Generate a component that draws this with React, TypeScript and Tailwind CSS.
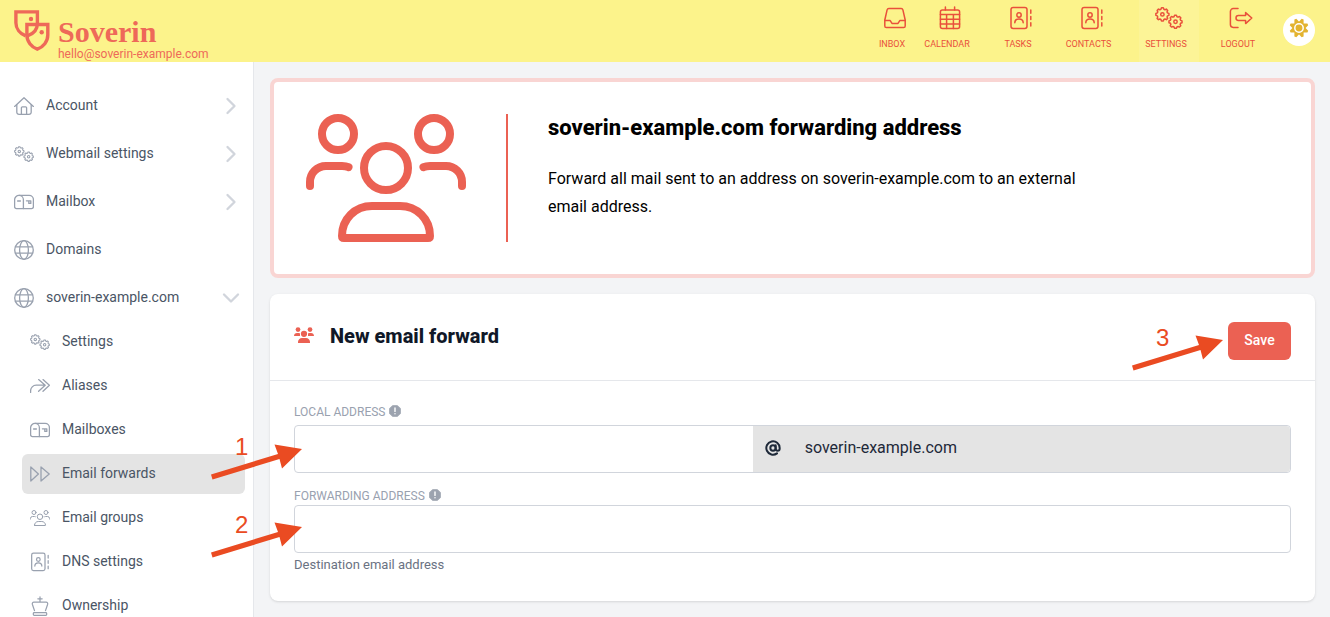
import React from "react";
import { AtSign, ChevronDown, ChevronRight } from "lucide-react";

type IconProps = { className?: string };

function Line({
  box = "0 0 20 20",
  width = 1.3,
  className = "",
  children,
}: {
  box?: string;
  width?: number;
  className?: string;
  children: React.ReactNode;
}) {
  return (
    <svg
      viewBox={box}
      className={className}
      fill="none"
      stroke="currentColor"
      strokeWidth={width}
      strokeLinecap="round"
      strokeLinejoin="round"
      aria-hidden="true"
    >
      {children}
    </svg>
  );
}

// Outline of a cog whose teeth alternate between two radii.
function cog(cx: number, cy: number, outer: number, inner: number, teeth: number, root: number, tip: number) {
  const points: string[] = [];
  const step = (Math.PI * 2) / teeth;
  for (let i = 0; i < teeth; i++) {
    const mid = i * step - Math.PI / 2;
    const corners: [number, number][] = [
      [-root, inner],
      [-tip, outer],
      [tip, outer],
      [root, inner],
    ];
    for (const [part, radius] of corners) {
      const a = mid + part * step;
      points.push(`${(cx + radius * Math.cos(a)).toFixed(2)} ${(cy + radius * Math.sin(a)).toFixed(2)}`);
    }
  }
  return `M${points.join("L")}Z`;
}

const Gears = ({ className }: IconProps) => (
  <Line box="0 0 28 22" width={1.5} className={className}>
    <path d={cog(7.4, 7.4, 6.6, 5.3, 8, 0.36, 0.18)} />
    <circle cx="7.4" cy="7.4" r="1.7" />
    <path d={cog(20.5, 14.8, 6.6, 5.3, 8, 0.36, 0.18)} />
    <circle cx="20.5" cy="14.8" r="1.7" />
  </Line>
);

const Home = ({ className }: IconProps) => (
  <Line className={className}>
    <path d="M.6 10.4 10 1.8l9.4 8.6" />
    <path d="M2.8 8.6v7.6a2.2 2.2 0 0 0 2.2 2.2h10a2.2 2.2 0 0 0 2.2-2.2V8.6" />
    <path d="M7.4 18.2v-6.4a.9.9 0 0 1 .9-.9h3.4a.9.9 0 0 1 .9.9v6.4" />
  </Line>
);

const MailboxIcon = ({ className }: IconProps) => (
  <Line className={className}>
    <path d="M5 3.4h10.2a4.2 4.2 0 0 1 4.2 4.2v7.2a1.8 1.8 0 0 1-1.8 1.8H2.4a1.8 1.8 0 0 1-1.8-1.8V7.8A4.4 4.4 0 0 1 5 3.4Z" />
    <path d="M5 3.4a4.4 4.4 0 0 1 4.4 4.4v8.8M3.6 9h2.8M12.4 8.8h4.4v2.6h-2V8.8" />
  </Line>
);

const Globe = ({ className }: IconProps) => (
  <Line className={className}>
    <circle cx="10" cy="10" r="9.3" />
    <ellipse cx="10" cy="10" rx="4.4" ry="9.3" />
    <path d="M1.4 6.9h17.2M1.4 13.1h17.2" />
  </Line>
);

const Alias = ({ className }: IconProps) => (
  <Line className={className}>
    <path d="M.6 16.4v-1.6a5.6 5.6 0 0 1 5.6-5.6H15M8.6 3.6l6.6 5.6-6.6 6M13 3.6l6.4 5.6-6.4 6" />
  </Line>
);

const Forward = ({ className }: IconProps) => (
  <Line className={className}>
    <path d="M.8 3v14l7.6-7ZM11 3v14l8.2-7Z" />
  </Line>
);

const Group = ({ className }: IconProps) => (
  <Line box="0 0 160 128" width={8} className={className}>
    <circle cx="32" cy="20" r="16" />
    <circle cx="128" cy="20" r="16" />
    <circle cx="80" cy="54" r="22" />
    <path d="M4 72v-4a16 16 0 0 1 16-16h16q4 0 6.500 1.200M156 72v-4a16 16 0 0 0-16-16h-16q-4 0-6.500 1.200" />
    <path d="M36 122c0-17 13-30 30-30h28c17 0 30 13 30 30q0 2-2 2H38q-2 0-2-2Z" />
  </Line>
);

const SolidGroup = ({ className }: IconProps) => (
  <svg viewBox="0 0 160 128" className={className} fill="currentColor" aria-hidden="true">
    <circle cx="32" cy="20" r="19" />
    <circle cx="128" cy="20" r="19" />
    <circle cx="80" cy="54" r="25" />
    <path d="M0 72c0-14 10-24 24-24h16c5 0 8 2 8 6v18ZM160 72c0-14-10-24-24-24h-16c-5 0-8 2-8 6v18Z" />
    <path d="M32 128v-8c0-18 14-32 32-32h32c18 0 32 14 32 32v8Z" />
  </svg>
);

const AddressBook = ({ className }: IconProps) => (
  <Line box="0 0 22 24" width={1.5} className={className}>
    <rect x="1" y="1.400" width="16" height="21" rx="2.200" />
    <circle cx="9" cy="9" r="2.200" />
    <path d="M4.800 16.800c0-2.600 1.700-3.800 4.200-3.800s4.200 1.200 4.200 3.800M20.800 4v3.200M20.800 10.400v3.200M20.800 16.800V20" />
  </Line>
);

const Crown = ({ className }: IconProps) => (
  <Line box="0 0 20 24" width={1.5} className={className}>
    <path d="M10 1v6M7.400 3.400h5.200M3.400 17.600.9 10.200C.4 8.600 1.200 7.200 2.800 7.200h14.400c1.600 0 2.400 1.400 1.900 3l-2.500 7.400" />
    <rect x="2" y="20" width="16" height="3.200" rx="1" />
  </Line>
);

const Inbox = ({ className }: IconProps) => (
  <Line box="0 0 22 22" width={1.5} className={className}>
    <path d="M4.800 1.600h12.400a1.800 1.800 0 0 1 1.700 1.300L21.200 13v6a1.600 1.600 0 0 1-1.600 1.600H2.400A1.600 1.600 0 0 1 .8 19v-6L3.100 2.900a1.800 1.800 0 0 1 1.700-1.300Z" />
    <path d="M.8 13.600h5.400l1.800 2.800h6l1.800-2.800h5.400" />
  </Line>
);

const Calendar = ({ className }: IconProps) => (
  <Line box="0 0 22 24" width={1.5} className={className}>
    <rect x="1.400" y="4" width="19.200" height="18.600" rx="2" />
    <path d="M6.400 1v3M15.600 1v3M1.400 8.400h19.200M1.400 13.200h19.200M1.400 18h19.200M7.600 8.400v14.200M14.400 8.400v14.200" />
  </Line>
);

const Logout = ({ className }: IconProps) => (
  <Line box="0 0 24 22" width={1.5} className={className}>
    <path d="M9 1.600H4.200A2.800 2.800 0 0 0 1.400 4.400v13.200a2.800 2.800 0 0 0 2.800 2.800H9" />
    <path d="M16.600 5.600v3H9.400a2.400 2.400 0 0 0 0 4.800h7.200v3.200l6.200-5.600Z" />
  </Line>
);

const Sun = ({ className }: IconProps) => (
  <svg viewBox="0 0 20 20" className={className} aria-hidden="true">
    <path d={cog(10, 10, 9.6, 6.6, 8, 0.48, 0.14)} fill="#e3b330" transform="rotate(22.5 10 10)" />
    <circle cx="10" cy="10" r="4.200" fill="#e3b330" stroke="#fff" strokeWidth="1.500" />
  </svg>
);

const Notice = ({ className }: IconProps) => (
  <svg viewBox="0 0 12 12" className={className} aria-hidden="true">
    <path
      d="M3.700.8h4.600l2.900 2.900v4.600l-2.900 2.900H3.700L.8 8.300V3.700Z"
      fill="#9ca3af"
      stroke="#9ca3af"
      strokeWidth="1.200"
      strokeLinejoin="round"
    />
    <path d="M6 3v3.400M6 8.600v.2" stroke="#fff" strokeWidth="1.400" strokeLinecap="round" />
  </svg>
);

const Shields = ({ className }: IconProps) => (
  <svg viewBox="0 0 36 42" className={className} fill="none" stroke="#ee6959" strokeWidth="3.400" aria-hidden="true">
    <path d="M11.700 25.900C6 23.600 1.900 18.600 1.900 12.700V1.900h21.500v11.400" />
    <path d="M23.400 13.300c0 6-3.900 10.600-10 12.600" />
    <path d="M12.900 14.500h20.900v10.600c0 6.400-4.400 11.900-10.500 14-6-2.100-10.400-7.600-10.400-14Z" />
    <circle cx="17" cy="9" r="2.200" fill="#ee6959" stroke="none" />
    <circle cx="27.700" cy="22.200" r="2.200" fill="#ee6959" stroke="none" />
  </svg>
);

function Pointer({ step, className }: { step: number; className: string }) {
  return (
    <div className={`pointer-events-none absolute z-20 h-9 w-[92px] ${className}`}>
      <svg viewBox="0 0 92 36" className="h-9 w-[92px]" fill="#ea4b22" aria-hidden="true">
        <path d="M0 30.500 67 10 63.500.5 91 5 71 24.500 68.500 15 1.500 35.500Z" />
      </svg>
      <span className="absolute -top-[13px] left-6 font-['Liberation_Sans',sans-serif] text-2xl text-[#ea4b22]">
        {step}
      </span>
    </div>
  );
}

const topLinks = [
  { label: "Inbox", Icon: Inbox, item: "w-[54px]", icon: "h-[22px] w-[22px]" },
  { label: "Calendar", Icon: Calendar, item: "w-14", icon: "h-6 w-[22px]" },
  { label: "Tasks", Icon: AddressBook, item: "w-[86px]", icon: "h-6 w-[22px]" },
  { label: "Contacts", Icon: AddressBook, item: "w-[55px]", icon: "h-6 w-[22px]" },
  { label: "Settings", Icon: Gears, item: "ml-5 w-[60px] bg-white/10", icon: "h-[22px] w-7" },
  { label: "Logout", Icon: Logout, item: "w-[84px]", icon: "h-[22px] w-6" },
];

const sections = [
  { label: "Account", Icon: Home, arrow: "right" },
  { label: "Webmail settings", Icon: Gears, arrow: "right" },
  { label: "Mailbox", Icon: MailboxIcon, arrow: "right" },
  { label: "Domains", Icon: Globe, arrow: "" },
  { label: "soverin-example.com", Icon: Globe, arrow: "down" },
];

const domainLinks = [
  { label: "Settings", Icon: Gears },
  { label: "Aliases", Icon: Alias },
  { label: "Mailboxes", Icon: MailboxIcon },
  { label: "Email forwards", Icon: Forward, active: true },
  { label: "Email groups", Icon: Group },
  { label: "DNS settings", Icon: AddressBook },
  { label: "Ownership", Icon: Crown },
];

function Header() {
  return (
    <header className="flex h-[62px] shrink-0 bg-[#fcf38b] text-[#e9503b]">
      <a href="#home" className="flex pt-2.5 pl-3.5">
        <Shields className="h-[42px] w-9 shrink-0" />
        <span className="flex flex-col pl-2 text-[#ee6959]">
          <span className="pt-1.5 font-['Liberation_Serif',serif] text-[30px] leading-8 font-bold">Soverin</span>
          <span className="text-xs leading-3">hello@soverin-example.com</span>
        </span>
      </a>
      <nav aria-label="Main" className="ml-auto flex">
        {topLinks.map(({ label, Icon, item, icon }) => (
          <a key={label} href={`#${label.toLowerCase()}`} className={`flex flex-col items-center pt-1.5 ${item}`}>
            <span className="flex h-6 items-center">
              <Icon className={icon} />
            </span>
            <span className="pt-2 pr-1.5 text-[9px] leading-3 uppercase">{label}</span>
          </a>
        ))}
      </nav>
      <button
        type="button"
        aria-label="Toggle theme"
        className="mt-3.5 mr-[15px] flex size-8 items-center justify-center rounded-full bg-white"
      >
        <Sun className="mb-1 size-5" />
      </button>
    </header>
  );
}

function Sidebar() {
  return (
    <aside className="w-[254px] shrink-0 overflow-hidden border-r border-gray-200 bg-white pt-6 pr-2 pl-1.5 text-sm text-gray-600">
      <nav aria-label="Settings" className="flex flex-col gap-2">
        {sections.map(({ label, Icon, arrow }) => (
          <a key={label} href="#section" className="flex h-10 shrink-0 items-center px-2">
            <Icon className="size-5 text-gray-400" />
            <span className="flex-1 pb-0.5 pl-3">{label}</span>
            {arrow === "right" && <ChevronRight className="-mr-2 size-7 text-gray-300" />}
            {arrow === "down" && <ChevronDown className="-mr-2 size-7 text-gray-300" />}
          </a>
        ))}
      </nav>
      <nav aria-label="Domain" className="mt-1 flex flex-col gap-1 pl-4">
        {domainLinks.map(({ label, Icon, active }) => (
          <a
            key={label}
            href="#domain"
            aria-current={active ? "page" : undefined}
            className={`flex h-10 shrink-0 items-center rounded-md px-2 ${active ? "bg-[#e4e4e4]" : ""}`}
          >
            <Icon className="size-5 text-gray-400" />
            <span className="pb-0.5 pl-3">{label}</span>
          </a>
        ))}
      </nav>
    </aside>
  );
}

export default function App() {
  return (
    <div className="flex h-screen flex-col bg-gray-100 font-[Roboto,sans-serif]">
      <Header />
      <div className="flex min-h-0 flex-1">
        <Sidebar />
        <main className="flex min-w-0 flex-1 flex-col gap-4 pt-4 pr-[15px] pl-4">
          <section className="flex rounded-lg border-4 border-[#f9d5d3] bg-white p-8">
            <Group className="h-32 w-40 shrink-0 text-[#eb6153]" />
            <div className="ml-10 border-l-2 border-[#eb6153] pl-10 text-black">
              <h1 className="text-[22px] leading-7 font-extrabold">soverin-example.com forwarding address</h1>
              <p className="mt-[23px] max-w-[560px] text-base leading-7">
                Forward all mail sent to an address on soverin-example.com to an external email address.
              </p>
            </div>
          </section>

          <form className="rounded-lg bg-white shadow-sm" onSubmit={(e) => e.preventDefault()}>
            <div className="flex items-center border-b border-gray-200 px-6 pt-7 pb-5">
              <SolidGroup className="mb-3 h-4 w-5 text-[#eb6153]" />
              <h2 className="mb-2.5 ml-4 text-xl leading-7 font-extrabold text-gray-900">New email forward</h2>
              <div className="relative ml-auto">
                <Pointer step={3} className="top-[13px] -left-24" />
                <button
                  type="submit"
                  className="h-[38px] w-[63px] rounded-md bg-[#eb6153] pb-0.5 text-sm font-medium text-white"
                >
                  Save
                </button>
              </div>
            </div>
            <div className="px-6 pt-[22px] pb-[26px]">
              <div className="flex h-[22px] items-start gap-1 text-xs leading-[18px] text-gray-400">
                <label htmlFor="local">LOCAL ADDRESS</label>
                <Notice className="mt-[2px] size-3" />
              </div>
              <div className="relative flex h-12 rounded border border-gray-300">
                <Pointer step={1} className="top-[18px] -left-[84px]" />
                <input id="local" type="text" className="w-[46%] rounded-l px-3 outline-none" />
                <div className="flex min-w-0 flex-1 items-center rounded-r bg-[#e4e4e4] px-3 pb-0.5 text-base text-gray-800">
                  <AtSign className="size-4" strokeWidth={3} />
                  <span className="pl-6">soverin-example.com</span>
                </div>
              </div>
              <div className="mt-3.5 flex h-[18px] items-start gap-1 text-xs leading-[18px] text-gray-400">
                <label htmlFor="forwarding">FORWARDING ADDRESS</label>
                <Notice className="mt-[2px] size-3" />
              </div>
              <div className="relative">
                <Pointer step={2} className="top-[17px] -left-[83px]" />
                <input
                  id="forwarding"
                  type="text"
                  aria-describedby="forwarding-help"
                  className="block h-12 w-full rounded border border-gray-300 px-3 outline-none"
                />
              </div>
              <p id="forwarding-help" className="mt-0.5 text-[13px] leading-5 text-gray-500">
                Destination email address
              </p>
            </div>
          </form>
        </main>
      </div>
    </div>
  );
}
